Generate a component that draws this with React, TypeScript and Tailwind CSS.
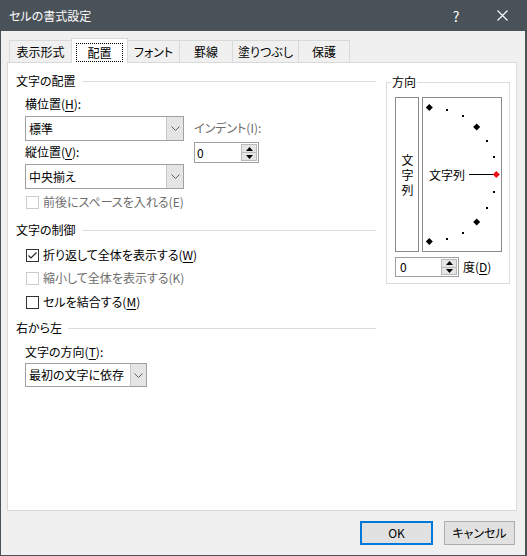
import React from 'react';

// --- 小物 ---
function Chevron() {
  return (
    <svg width="9" height="5" viewBox="0 0 9 5">
      <path d="M0.5 0.5 L4.5 4.5 L8.5 0.5" fill="none" stroke="#606060" strokeWidth="1" />
    </svg>
  );
}

function U({ children }: { children: React.ReactNode }) {
  return <span className="underline underline-offset-2 decoration-1">{children}</span>;
}

function Section({ title, className = '' }: { title: string; className?: string }) {
  return (
    <div className={`flex items-center h-4 ${className}`}>
      <span>{title}</span>
      <div className="flex-1 h-px bg-[#dcdcdc] ml-[6px]" />
    </div>
  );
}

function SpinButtons() {
  return (
    <div className="flex flex-col w-[16px] m-px">
      <div className="flex-1 flex items-center justify-center bg-[#e5e5e5] border border-[#b9b9b9]">
        <svg width="7" height="4" viewBox="0 0 7 4">
          <path d="M0 4 L3.5 0 L7 4Z" fill="#000" />
        </svg>
      </div>
      <div className="flex-1 flex items-center justify-center bg-[#e5e5e5] border border-t-0 border-[#b9b9b9]">
        <svg width="7" height="4" viewBox="0 0 7 4">
          <path d="M0 0 L3.5 4 L7 0Z" fill="#000" />
        </svg>
      </div>
    </div>
  );
}

function Check({ checked, disabled, children, className = '' }: { checked?: boolean; disabled?: boolean; children: React.ReactNode; className?: string }) {
  return (
    <div className={`flex items-center h-4 pl-[10px] ${disabled ? 'text-[#6d6d6d]' : ''} ${className}`}>
      <div className={`w-[13px] h-[13px] border bg-white flex items-center justify-center ${disabled ? 'border-[#cccccc]' : 'border-[#333333]'}`}>
        {checked && (
          <svg width="11" height="11" viewBox="0 0 11 11">
            <path d="M1.5 5.5 L4 8 L9.5 2.5" fill="none" stroke="#222" strokeWidth="1.2" />
          </svg>
        )}
      </div>
      <span className="ml-[4px]">{children}</span>
    </div>
  );
}

// 方向ダイヤル
function Dial() {
  const cx = 6.3;
  const cy = 76.5;
  const r = 67;
  const marks = [];
  for (let a = 90; a >= -90; a -= 15) {
    const rad = (a * Math.PI) / 180;
    const x = cx + r * Math.cos(rad);
    const y = cy - r * Math.sin(rad);
    if (a % 45 === 0) {
      const fill = a === 0 ? '#e81010' : '#000';
      marks.push(
        <polygon
          key={a}
          points={`${x},${y - 3.5} ${x + 3.5},${y} ${x},${y + 3.5} ${x - 3.5},${y}`}
          fill={fill}
        />
      );
    } else {
      marks.push(<rect key={a} x={Math.round(x - 1)} y={Math.round(y - 1)} width="2" height="2" fill="#000" />);
    }
  }
  return (
    <div className="relative w-[80px] h-[155px] border border-[#8a8a8a] flex items-center pl-[6px]">
      <svg className="absolute inset-0" width="78" height="153" viewBox="0 0 78 153">
        <line x1="46" y1="76.5" x2="70" y2="76.5" stroke="#000" strokeWidth="1" />
        {marks}
      </svg>
      <span className="relative">文字列</span>
    </div>
  );
}

export default function App() {
  return (
    <div className="w-[527px] h-[556px] flex flex-col bg-[#f0f0f0] border-l border-r-2 border-b border-[#4a5259] text-[12px] leading-4 text-black [font-family:'Noto_Sans_CJK_JP',sans-serif] [font-feature-settings:'palt']">
      {/* タイトルバー */}
      <div className="h-[31px] shrink-0 bg-[#4a5259] flex items-center text-white">
        <span className="pl-[8px]">セルの書式設定</span>
        <div className="ml-auto flex h-full">
          <div className="w-[46px] flex items-center justify-center text-[14px]">?</div>
          <div className="w-[46px] flex items-center justify-center">
            <svg width="11" height="11" viewBox="0 0 11 11">
              <path d="M0.5 0.5 L10.5 10.5 M10.5 0.5 L0.5 10.5" stroke="#fff" strokeWidth="1.1" />
            </svg>
          </div>
        </div>
      </div>

      <div className="flex flex-col pl-[6px] pr-[8px] pt-[7px]">
        {/* タブ */}
        <div className="flex items-end h-[24px] ml-[2px] relative z-10">
          <div className="w-[62px] h-[22px] border-l border-t border-[#d9d9d9] flex items-center justify-center">表示形式</div>
          <div className="w-[57px] h-[25px] -mb-px bg-white border-l border-r border-t border-[#d9d9d9] px-[4px] pt-[4px]">
            <div className="h-[19px] border border-dotted border-black flex items-center justify-center">配置</div>
          </div>
          <div className="w-[51px] h-[22px] border-t border-[#d9d9d9] flex items-center justify-center">フォント</div>
          <div className="w-[53px] h-[22px] border-l border-t border-[#d9d9d9] flex items-center justify-center">罫線</div>
          <div className="w-[66px] h-[22px] border-l border-t border-[#d9d9d9] flex items-center justify-center">塗りつぶし</div>
          <div className="w-[52px] h-[22px] border-l border-t border-r border-[#d9d9d9] flex items-center justify-center">保護</div>
        </div>

        {/* パネル */}
        <div className="h-[449px] bg-white border border-[#d9d9d9] flex pt-[10px] pl-[8px]">
          <div className="w-[360px] flex flex-col">
            <Section title="文字の配置" />
            <div className="flex mt-[7px] pl-[9px]">
              <div className="flex flex-col w-[159px]">
                <div className="h-4">横位置(<U>H</U>):</div>
                <div className="flex h-[25px] mt-[4px] border border-[#a0a0a0] bg-white">
                  <div className="flex-1 flex items-center pl-[3px]">標準</div>
                  <div className="w-[17px] flex items-center justify-center bg-[#e5e5e5] border-l border-[#c8c8c8]"><Chevron /></div>
                </div>
                <div className="h-4 mt-[3px]">縦位置(<U>V</U>):</div>
                <div className="flex h-[25px] mt-[4px] border border-[#a0a0a0] bg-white">
                  <div className="flex-1 flex items-center pl-[3px]">中央揃え</div>
                  <div className="w-[17px] flex items-center justify-center bg-[#e5e5e5] border-l border-[#c8c8c8]"><Chevron /></div>
                </div>
              </div>
              <div className="flex flex-col ml-[10px] pt-[24px]">
                <div className="h-4 text-[#6d6d6d]">インデント(I):</div>
                <div className="flex w-[65px] h-[21px] mt-[6px] border border-[#a0a0a0] bg-white">
                  <div className="flex-1 flex items-center pl-[2px]">0</div>
                  <SpinButtons />
                </div>
              </div>
            </div>
            <Check disabled className="mt-[5px]">前後にスペースを入れる(E)</Check>

            <Section title="文字の制御" className="mt-[12px]" />
            <Check checked className="mt-[9px]">折り返して全体を表示する(<U>W</U>)</Check>
            <Check disabled className="mt-[7px]">縮小して全体を表示する(K)</Check>
            <Check className="mt-[8px]">セルを結合する(<U>M</U>)</Check>

            <Section title="右から左" className="mt-[10px]" />
            <div className="h-4 mt-[8px] pl-[9px]">文字の方向(<U>T</U>):</div>
            <div className="flex w-[122px] h-[24px] mt-[3px] ml-[9px] border border-[#a0a0a0] bg-white">
              <div className="flex-1 flex items-center pl-[3px]">最初の文字に依存</div>
              <div className="w-[16px] flex items-center justify-center bg-[#e5e5e5] border-l border-[#c8c8c8]"><Chevron /></div>
            </div>
          </div>

          {/* 方向 */}
          <fieldset className="w-[124px] h-fit ml-[10px] mt-px border border-[#dcdcdc] pl-[8px] pr-[7px] pt-[7px] pb-[6px]">
            <legend className="-ml-[4px] px-px leading-4">方向</legend>
            <div className="flex gap-[3px]">
              <div className="w-[24px] h-[155px] border border-[#8a8a8a] flex items-center justify-center">
                <span className="[writing-mode:vertical-rl] tracking-[3px] leading-[20px] pt-[3px]">文字列</span>
              </div>
              <Dial />
            </div>
            <div className="flex items-center mt-[5px]">
              <div className="flex w-[64px] h-[20px] border border-[#a0a0a0] bg-white">
                <div className="flex-1 flex items-center pl-[4px]">0</div>
                <SpinButtons />
              </div>
              <span className="ml-[4px]">度(<U>D</U>)</span>
            </div>
          </fieldset>
        </div>

        {/* ボタン */}
        <div className="flex justify-end gap-[11px] mt-[10px] pr-[2px]">
          <button className="w-[73px] h-[24px] border-2 border-[#0078d7] bg-[#e1e1e1] flex items-center justify-center">OK</button>
          <button className="w-[71px] h-[24px] border border-[#adadad] bg-[#e1e1e1] flex items-center justify-center">キャンセル</button>
        </div>
      </div>
    </div>
  );
}
